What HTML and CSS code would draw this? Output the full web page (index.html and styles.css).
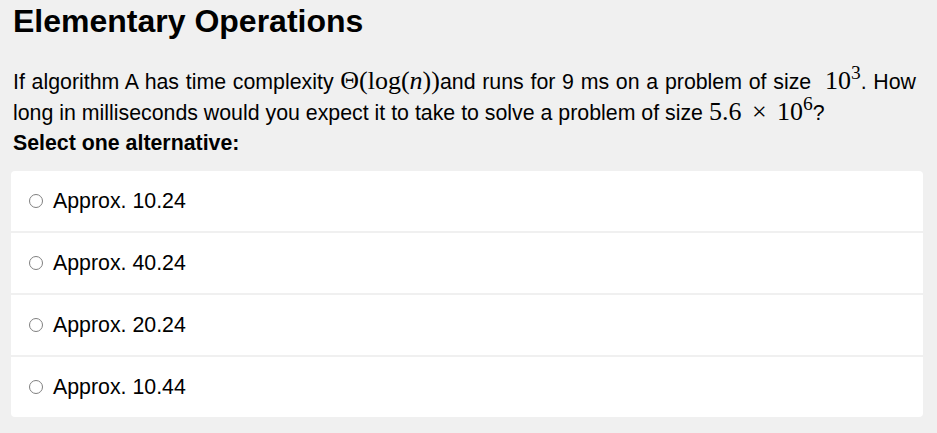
FILE: index.html
```html
<!DOCTYPE html>
<html>
<head>
<meta charset="utf-8">
<link rel="stylesheet" href="styles.css">
</head>
<body>
<div class="page">
  <h1 class="title">Elementary Operations</h1>
  <div class="question">
    <p class="prompt">If algorithm A has time complexity <span class="math">Θ(log(<i>n</i>))</span>and runs for 9 ms on a problem of size <span class="math sp">10<sup>3</sup></span>. How long in milliseconds would you expect it to take to solve a problem of size <span class="math">5.6 <span class="op">×</span> 10<sup>6</sup></span>?</p>
    <p class="select">Select one alternative:</p>
  </div>
  <div class="options">
    <label class="option"><span class="radio"></span><span class="opt-text">Approx. 10.24</span></label>
    <label class="option"><span class="radio"></span><span class="opt-text">Approx. 40.24</span></label>
    <label class="option"><span class="radio"></span><span class="opt-text">Approx. 20.24</span></label>
    <label class="option"><span class="radio"></span><span class="opt-text">Approx. 10.44</span></label>
  </div>
</div>
</body>
</html>
```
FILE: styles.css
```css
html, body {
  margin: 0;
  padding: 0;
  background: #f0f0f0;
}
body {
  font-family: "Liberation Sans", Arial, sans-serif;
  color: #000;
}
.page {
  padding: 3px 14px 0 11px;
}
.title {
  margin: 0 0 0 2px;
  font-size: 32px;
  font-weight: bold;
  line-height: 37px;
}
.question {
  margin: 27px 7px 0 2px;
  font-size: 21.33px;
}
.prompt {
  margin: 0;
  line-height: 30.5px;
  text-align: justify;
}
.math {
  font-family: "Liberation Serif", "DejaVu Serif", serif;
  font-size: 26px;
  line-height: 0;
  white-space: nowrap;
}
.math.sp {
  margin-left: 7px;
}
.math .op {
  margin: 0 4px;
}
.math sup {
  font-size: 0.75em;
  vertical-align: 0.5em;
  line-height: 0;
}
.select {
  margin: 0;
  font-weight: bold;
  line-height: 30px;
}
.options {
  margin-top: 13px;
  display: flex;
  flex-direction: column;
  gap: 2px;
  border-radius: 4px;
  overflow: hidden;
}
.option {
  background: #fff;
  height: 60px;
  display: flex;
  align-items: center;
  padding-left: 18px;
  gap: 10px;
  font-size: 21.33px;
}
.radio {
  width: 12px;
  height: 12px;
  border: 1.5px solid #808080;
  border-radius: 50%;
  flex: none;
}
```
